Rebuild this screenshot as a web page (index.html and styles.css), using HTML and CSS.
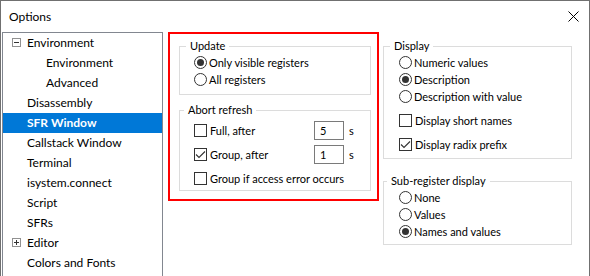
FILE: index.html
```html
<!DOCTYPE html>
<html lang="en">
<head>
  <meta charset="UTF-8">
  <meta name="viewport" content="width=device-width, initial-scale=1.0">
  <title>Options</title>
  <link rel="stylesheet" href="styles.css">
</head>
<body>
  <div class="window">
    <div class="titlebar">
      <span class="title">Options</span>
      <svg class="close" width="11" height="11" viewBox="0 0 11 11">
        <path d="M0.5 0.5 L10.5 10.5 M10.5 0.5 L0.5 10.5" stroke="#000" stroke-width="1" fill="none"/>
      </svg>
    </div>

    <div class="main">
      <ul class="tree">
        <li class="node"><span class="toggle minus"></span>Environment</li>
        <li class="node child">Environment</li>
        <li class="node child">Advanced</li>
        <li class="node leaf">Disassembly</li>
        <li class="node leaf selected">SFR Window</li>
        <li class="node leaf">Callstack Window</li>
        <li class="node leaf">Terminal</li>
        <li class="node leaf">isystem.connect</li>
        <li class="node leaf">Script</li>
        <li class="node leaf">SFRs</li>
        <li class="node"><span class="toggle plus"></span>Editor</li>
        <li class="node leaf">Colors and Fonts</li>
      </ul>

      <!-- highlighted settings page -->
      <div class="page">
        <fieldset class="group update">
          <legend>Update</legend>
          <label class="opt"><span class="radio on"></span>Only visible registers</label>
          <label class="opt"><span class="radio"></span>All registers</label>
        </fieldset>

        <fieldset class="group abort">
          <legend>Abort refresh</legend>
          <div class="row">
            <label class="opt wide"><span class="box"></span>Full, after</label>
            <span class="num">5</span>
            <span class="unit">s</span>
          </div>
          <div class="row">
            <label class="opt wide"><span class="box checked"><svg width="11" height="11" viewBox="0 0 11 11"><path d="M1 5.5 L4 8.5 L10 2.5" stroke="#333" stroke-width="1.1" fill="none"/></svg></span>Group, after</label>
            <span class="num">1</span>
            <span class="unit">s</span>
          </div>
          <label class="opt last"><span class="box"></span>Group if access error occurs</label>
        </fieldset>
      </div>

      <div class="side">
        <fieldset class="group display">
          <legend>Display</legend>
          <label class="opt"><span class="radio"></span>Numeric values</label>
          <label class="opt"><span class="radio on"></span>Description</label>
          <label class="opt"><span class="radio"></span>Description with value</label>
          <div class="checks">
            <div class="row"><label class="opt"><span class="box"></span>Display short names</label></div>
            <div class="row"><label class="opt"><span class="box checked"><svg width="11" height="11" viewBox="0 0 11 11"><path d="M1 5.5 L4 8.5 L10 2.5" stroke="#333" stroke-width="1.1" fill="none"/></svg></span>Display radix prefix</label></div>
          </div>
        </fieldset>

        <fieldset class="group subreg">
          <legend>Sub-register display</legend>
          <label class="opt"><span class="radio"></span>None</label>
          <label class="opt"><span class="radio"></span>Values</label>
          <label class="opt"><span class="radio on"></span>Names and values</label>
        </fieldset>
      </div>
    </div>
  </div>
</body>
</html>
```

FILE: styles.css
```css
body {
  margin: 0;
  font-family: Lato, "Noto Sans", sans-serif;
  font-size: 12px;
  color: #000;
  background: #fff;
}

.window {
  width: 590px;
  height: 276px;
  box-sizing: border-box;
  border: 1px solid #707070;
  border-bottom: none;
  overflow: hidden;
}

.titlebar {
  height: 31px;
  display: flex;
  align-items: center;
  justify-content: space-between;
  padding: 0 10px 1px 8px;
  box-sizing: border-box;
}

.title {
  font-size: 12px;
}

.main {
  display: flex;
  align-items: flex-start;
  padding-left: 1px;
}

/* Left navigation tree */
.tree {
  margin: 0;
  padding: 0;
  list-style: none;
  width: 159px;
  height: 250px;
  border: 1px solid #828790;
}

.node {
  display: flex;
  align-items: center;
  height: 20px;
  box-sizing: border-box;
  padding-left: 9px;
  padding-bottom: 1px;
  white-space: nowrap;
}

.node.leaf {
  padding-left: 24px;
}

.node.child {
  padding-left: 43px;
}

.node.selected {
  background: #0078d7;
  color: #fff;
  font-weight: bold;
}

.toggle {
  position: relative;
  width: 9px;
  height: 9px;
  box-sizing: border-box;
  border: 1px solid #919191;
  margin-right: 6px;
}

.toggle::before,
.toggle.plus::after {
  content: '';
  position: absolute;
  background: #333;
}

.toggle::before {
  left: 1px;
  top: 3px;
  width: 5px;
  height: 1px;
}

.toggle.plus::after {
  left: 3px;
  top: 1px;
  width: 1px;
  height: 5px;
}

/* Dialog controls use the smaller dialog font */
.page,
.side {
  font-size: 11px;
}

/* Highlighted page */
.page {
  margin-left: 5px;
  width: 192px;
  border: 2px solid #f00;
  padding: 4px 6px 8px 9px;
}

.side {
  margin-left: 4px;
  width: 189px;
  padding-top: 6px;
}

.group {
  margin: 0;
  min-inline-size: 0;
  border: 1px solid #dcdcdc;
}

.group legend {
  padding: 0 4px;
  line-height: 16px;
}

.update {
  padding: 0 6px 6px 14px;
}

.update legend {
  margin-left: -8px;
}

.abort {
  margin-top: 7px;
  padding: 0 6px 3px 14px;
}

.abort legend {
  margin-left: -10px;
}

.display {
  padding: 0 6px 2px 15px;
}

.display legend {
  margin-left: -9px;
}

.subreg {
  margin-top: 14px;
  padding: 0 6px 4px 15px;
}

.subreg legend {
  margin-left: -12px;
}

.opt {
  display: flex;
  align-items: center;
  height: 17px;
  white-space: nowrap;
}

.opt.wide {
  width: 120px;
}

.opt.last {
  margin-top: 4px;
}

.row {
  display: flex;
  align-items: center;
  height: 24px;
}

.checks {
  margin-top: 3px;
}

.radio {
  position: relative;
  width: 13px;
  height: 13px;
  box-sizing: border-box;
  border: 1px solid #333;
  border-radius: 50%;
  margin-right: 2px;
  flex: none;
}

.radio.on::after {
  content: '';
  position: absolute;
  left: 2px;
  top: 2px;
  width: 7px;
  height: 7px;
  border-radius: 50%;
  background: #333;
}

.box {
  display: flex;
  align-items: center;
  justify-content: center;
  width: 13px;
  height: 13px;
  box-sizing: border-box;
  border: 1px solid #333;
  margin-right: 3px;
  flex: none;
}

.num {
  width: 30px;
  height: 19px;
  box-sizing: border-box;
  border: 1px solid #7a7a7a;
  padding-left: 5px;
  line-height: 17px;
}

.unit {
  margin-left: 5px;
}
```
